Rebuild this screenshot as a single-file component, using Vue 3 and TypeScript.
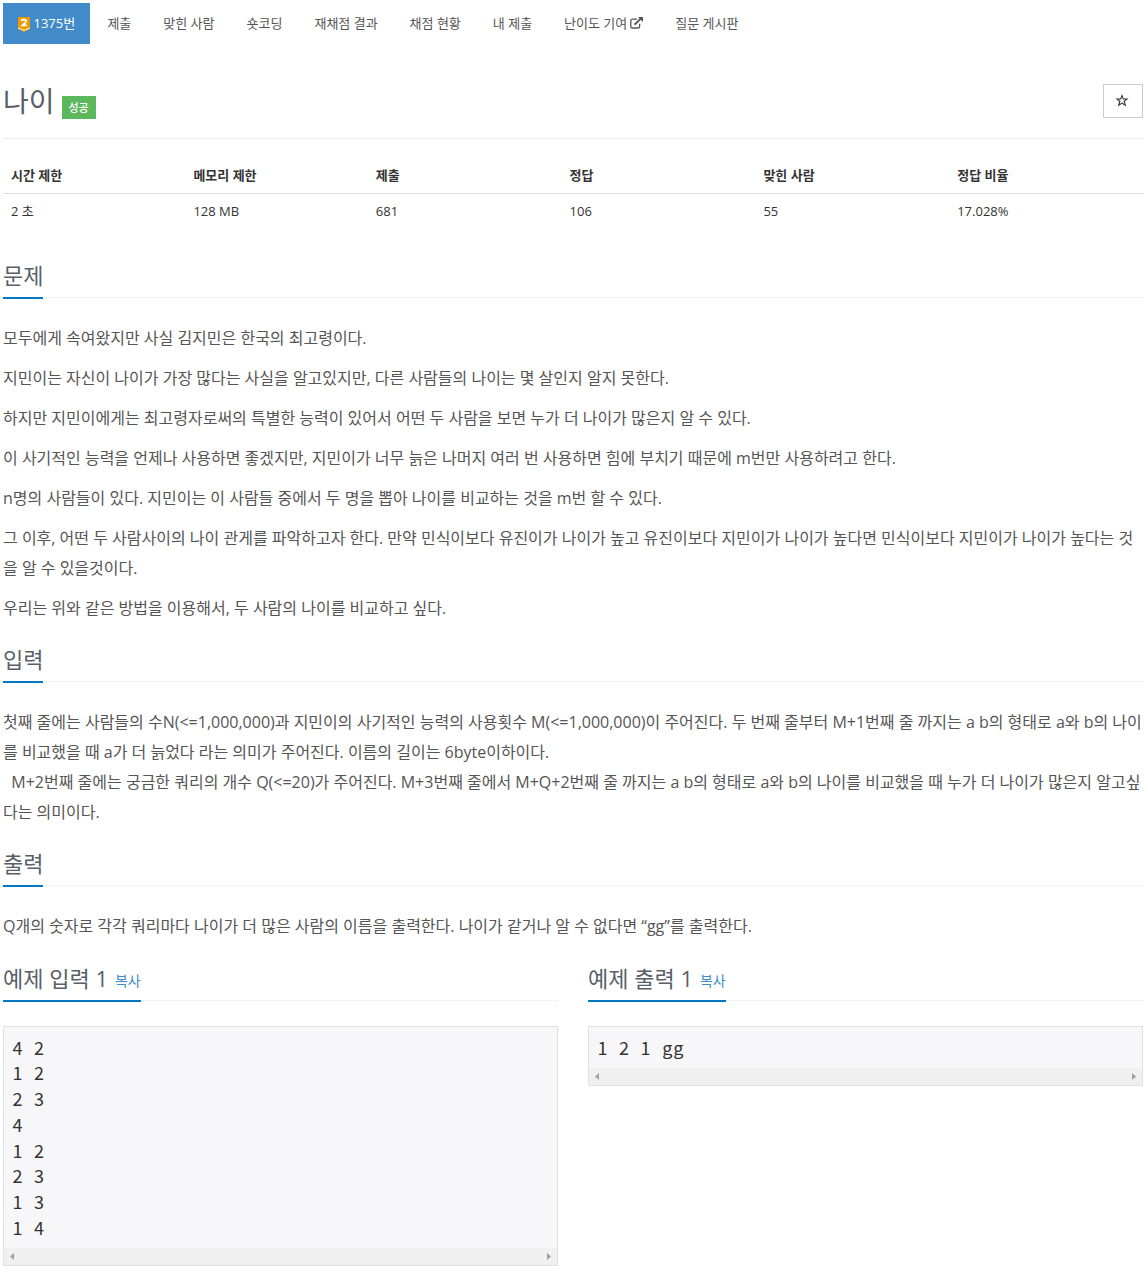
<script setup lang="ts">
interface Column {
  label: string
  value: string
}

interface Section {
  title: string
  paragraphs: string[][]
}

interface Sample {
  title: string
  data: string
}

const menu: string[] = ['제출', '맞힌 사람', '숏코딩', '재채점 결과', '채점 현황', '내 제출', '난이도 기여', '질문 게시판']

const columns: Column[] = [
  { label: '시간 제한', value: '2 초' },
  { label: '메모리 제한', value: '128 MB' },
  { label: '제출', value: '681' },
  { label: '정답', value: '106' },
  { label: '맞힌 사람', value: '55' },
  { label: '정답 비율', value: '17.028%' },
]

const sections: Section[] = [
  {
    title: '문제',
    paragraphs: [
      ['모두에게 속여왔지만 사실 김지민은 한국의 최고령이다.'],
      ['지민이는 자신이 나이가 가장 많다는 사실을 알고있지만, 다른 사람들의 나이는 몇 살인지 알지 못한다.'],
      ['하지만 지민이에게는 최고령자로써의 특별한 능력이 있어서 어떤 두 사람을 보면 누가 더 나이가 많은지 알 수 있다.'],
      ['이 사기적인 능력을 언제나 사용하면 좋겠지만, 지민이가 너무 늙은 나머지 여러 번 사용하면 힘에 부치기 때문에 m번만 사용하려고 한다.'],
      ['n명의 사람들이 있다. 지민이는 이 사람들 중에서 두 명을 뽑아 나이를 비교하는 것을 m번 할 수 있다.'],
      [
        '그 이후, 어떤 두 사람사이의 나이 관게를 파악하고자 한다. 만약 민식이보다 유진이가 나이가 높고 유진이보다 지민이가 나이가 높다면 민식이보다 지민이가 나이가 높다는 것',
        '을 알 수 있을것이다.',
      ],
      ['우리는 위와 같은 방법을 이용해서, 두 사람의 나이를 비교하고 싶다.'],
    ],
  },
  {
    title: '입력',
    paragraphs: [
      [
        '첫째 줄에는 사람들의 수N(<=1,000,000)과 지민이의 사기적인 능력의 사용횟수 M(<=1,000,000)이 주어진다. 두 번째 줄부터 M+1번째 줄 까지는 a b의 형태로 a와 b의 나이',
        '를 비교했을 때 a가 더 늙었다 라는 의미가 주어진다. 이름의 길이는 6byte이하이다.',
        '\u00a0\u00a0M+2번째 줄에는 궁금한 쿼리의 개수 Q(<=20)가 주어진다. M+3번째 줄에서 M+Q+2번째 줄 까지는 a b의 형태로 a와 b의 나이를 비교했을 때 누가 더 나이가 많은지 알고싶',
        '다는 의미이다.',
      ],
    ],
  },
  {
    title: '출력',
    paragraphs: [['Q개의 숫자로 각각 쿼리마다 나이가 더 많은 사람의 이름을 출력한다. 나이가 같거나 알 수 없다면 “gg”를 출력한다.']],
  },
]

const samples: Sample[] = [
  { title: '예제 입력 1', data: '4 2\n1 2\n2 3\n4\n1 2\n2 3\n1 3\n1 4' },
  { title: '예제 출력 1', data: '1 2 1 gg' },
]
</script>

<template>
  <main class="page">
    <nav class="menu">
      <a class="item active">
        <svg class="tier" width="12" height="15" viewBox="0 0 12 15">
          <path d="M0 0H12V12L6 15L0 12Z" fill="#ec9a00" />
          <path d="M0 10.8L6 13.4L12 10.8" fill="none" stroke="#fff" stroke-width=".9" />
          <path d="M3.6 4.2C3.8 1.9 8.2 2 8.1 4.3C8 5.8 5.8 6.7 4.4 8.4H8.9" fill="none" stroke="#fff" stroke-width="1.8" />
        </svg>
        <span>1375번</span>
      </a>
      <a v-for="name in menu" :key="name" class="item">
        {{ name }}
        <svg v-if="name === '난이도 기여'" class="external" width="13" height="12" viewBox="0 0 13 12">
          <path d="M7 2.2H2.4Q.8 2.2.8 3.8V9.4Q.8 11 2.4 11H8Q9.6 11 9.6 9.4V6.8" fill="none" stroke="#555" stroke-width="1.3" />
          <path d="M4.6 7.6L11 1.4" stroke="#555" stroke-width="2" />
          <path d="M8 0H13V5Z" fill="#555" />
        </svg>
      </a>
    </nav>

    <header class="title">
      <h1>나이</h1>
      <span class="label">성공</span>
      <button class="star" type="button">
        <svg width="14" height="13" viewBox="0 0 14 13">
          <path fill-rule="evenodd" d="M7 0L8.7 4.5H13.6L9.8 7.6L11.2 12.6L7 9.8L2.8 12.6L4.2 7.6L.4 4.5H5.3ZM7 3L6.1 5.6H3.5L5.5 7.2L4.7 10L7 8.4L9.3 10L8.5 7.2L10.5 5.6H7.9Z" fill="#333" />
        </svg>
      </button>
    </header>

    <table class="info">
      <thead>
        <tr><th v-for="c in columns" :key="c.label">{{ c.label }}</th></tr>
      </thead>
      <tbody>
        <tr><td v-for="c in columns" :key="c.label">{{ c.value }}</td></tr>
      </tbody>
    </table>

    <section v-for="s in sections" :key="s.title" class="section">
      <div class="headline"><h2>{{ s.title }}</h2></div>
      <p v-for="(lines, i) in s.paragraphs" :key="i">
        <template v-for="(line, n) in lines" :key="n"><br v-if="n > 0">{{ line }}</template>
      </p>
    </section>

    <div class="samples">
      <section v-for="s in samples" :key="s.title" class="sample">
        <div class="headline"><h2>{{ s.title }}<a class="copy">복사</a></h2></div>
        <div class="box">
          <pre>{{ s.data }}</pre>
          <div class="scrollbar">
            <svg width="4" height="7" viewBox="0 0 4 7"><path d="M4 0V7L0 3.5Z" fill="#a0a0a0" /></svg>
            <svg width="4" height="7" viewBox="0 0 4 7"><path d="M0 0V7L4 3.5Z" fill="#a0a0a0" /></svg>
          </div>
        </div>
      </section>
    </div>
  </main>
</template>

<style>
body {
  background: #fff;
}
</style>

<style scoped>
.page {
  box-sizing: border-box;
  width: 1147px;
  height: 1269px;
  overflow: hidden;
  padding: 3px 4px 0 3px;
  font-family: "Open Sans", "Noto Sans CJK KR", sans-serif;
  font-size: 13px;
  color: #333;
}

.menu {
  display: flex;
  gap: 2px;
  height: 41px;
}

.item {
  display: flex;
  box-sizing: border-box;
  align-items: center;
  padding: 0 15px 2px;
  line-height: 20px;
  white-space: nowrap;
  color: #555;
}

.item.active {
  width: 87.4px;
  padding-left: 14.5px;
  background: #428bca;
  color: #fff;
}

.tier {
  margin: 3px 4px 0 0;
}

.external {
  margin-left: 3px;
}

.title {
  display: flex;
  box-sizing: border-box;
  height: 95px;
  padding-top: 40px;
  border-bottom: 1px solid #eee;
}

h1 {
  margin: 0;
  font-size: 28px;
  line-height: 34px;
  font-weight: 400;
  color: #585f69;
}

.label {
  box-sizing: border-box;
  width: 34px;
  height: 23px;
  margin: 12px auto 0 7px;
  background: #5cb85c;
  color: #fff;
  font-size: 11px;
  line-height: 23px;
  font-weight: 500;
  text-align: center;
}

.star {
  display: flex;
  box-sizing: border-box;
  align-items: center;
  justify-content: center;
  width: 40px;
  height: 34px;
  padding: 0 2px 1px 0;
  border: 1px solid #ccc;
  background: #fff;
}

.info {
  width: 1140px;
  margin-top: 19px;
  border-collapse: separate;
  border-spacing: 0;
  table-layout: fixed;
}

.info th,
.info td {
  box-sizing: border-box;
  width: 17%;
  height: 19px;
  padding: 8px;
  line-height: 19px;
  text-align: left;
}

.info th:nth-child(-n + 2) {
  width: 16%;
}

.info th {
  border-bottom: 1px solid #ddd;
  font-weight: 700;
}

.headline {
  display: flex;
  height: 40px;
  margin: 0 0 25px;
  border-bottom: 1px dotted #e4e9f0;
}

h2 {
  height: 40px;
  margin: 0;
  border-bottom: 2px solid #0077c2;
  font-size: 22px;
  line-height: 36px;
  font-weight: 400;
  white-space: nowrap;
  color: #585f69;
}

.section {
  padding-top: 18px;
}

.info + .section {
  padding-top: 28px;
}

p {
  margin: 0 0 10px;
  font-size: 16px;
  line-height: 30px;
  white-space: nowrap;
  color: #555;
}

.section p:last-child {
  margin-bottom: 0;
}

.samples {
  display: flex;
  gap: 30px;
  padding-top: 19px;
}

.sample {
  width: 555px;
}

.copy {
  margin-left: 7px;
  font-size: 14px;
  line-height: 1;
  vertical-align: 1px;
  color: #428bca;
}

.box {
  border: 1px solid #e0e0e5;
  background: #f7f7f9;
}

pre {
  margin: 0;
  padding: 7.7px 8px 7.3px 8.4px;
  font-family: "Noto Sans CJK KR", sans-serif;
  font-size: 18px;
  line-height: 25.71px;
  letter-spacing: 0.81px;
  word-spacing: 5.96px;
  color: #333;
}

.scrollbar {
  display: flex;
  align-items: center;
  justify-content: space-between;
  height: 17px;
  padding: 0 6px;
  background: #f0f0f0;
}
</style>
